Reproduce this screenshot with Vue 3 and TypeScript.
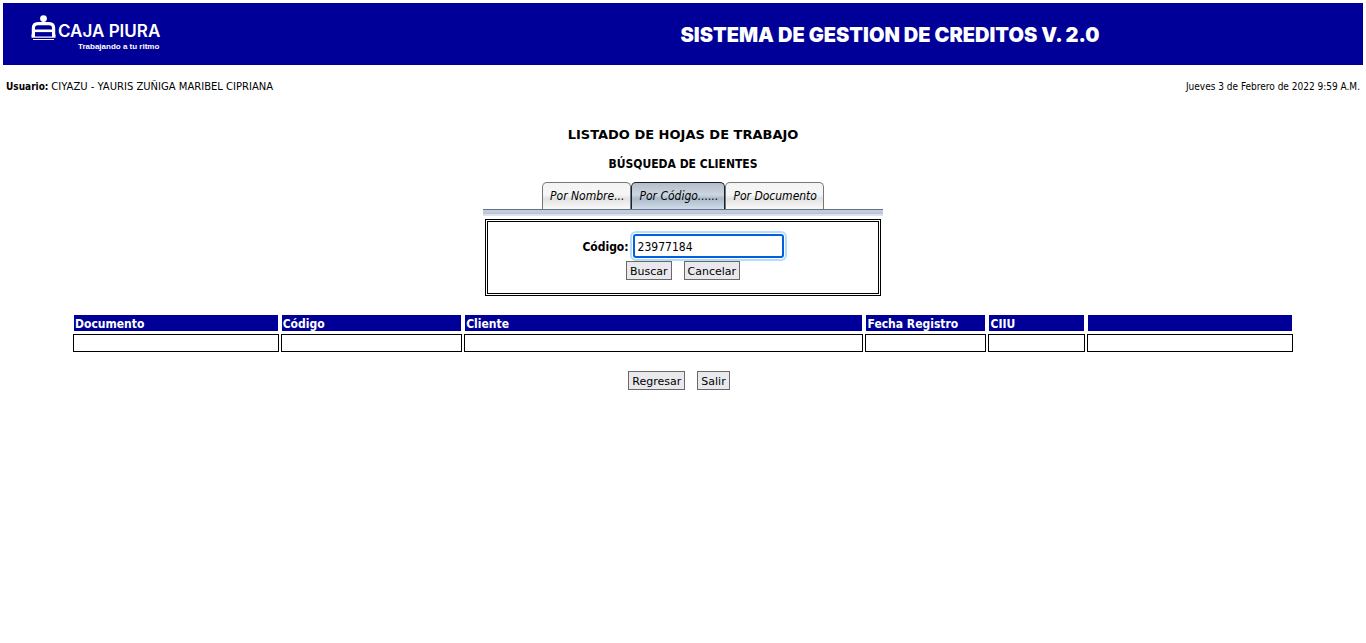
<script setup lang="ts">
import { ref } from 'vue'

interface Column {
  label: string
  width: string
}

const tabs: string[] = ['Por Nombre...', 'Por Código......', 'Por Documento']
const activeTab = ref(1)
const code = ref('23977184')

const columns: Column[] = [
  { label: 'Documento', width: '17%' },
  { label: 'Código', width: '15%' },
  { label: 'Cliente', width: '33%' },
  { label: 'Fecha Registro', width: '10%' },
  { label: 'CIIU', width: '8%' },
  { label: '', width: '17%' },
]
</script>

<template>
  <div class="page">
    <header class="banner">
      <div class="logo">
        <svg class="mark" viewBox="0 0 25 26" width="25" height="26" aria-hidden="true">
          <circle cx="12.5" cy="3.6" r="3.4" fill="#fff" />
          <path d="M2.4 21V13Q2.4 8.6 6.9 8.6H18.1Q22.6 8.6 22.6 13V21" fill="none" stroke="#fff" stroke-width="3.2" />
          <path d="M2 15.8H23" stroke="#fff" stroke-width="2.6" />
          <path d="M0.5 19.5H4V21.6H21V19.5H24.5V22.8H0.5ZM2 24H23V25H2Z" fill="#fff" />
        </svg>
        <div class="words">
          <span class="brand">CAJA PIURA</span>
          <span class="motto">Trabajando a tu ritmo</span>
        </div>
      </div>
      <div class="system">SISTEMA DE GESTION DE CREDITOS V. 2.0</div>
    </header>

    <div class="session">
      <span><b>Usuario:</b> <span class="user">CIYAZU - YAURIS ZUÑIGA MARIBEL CIPRIANA</span></span>
      <span>Jueves 3 de Febrero de 2022 9:59 A.M.</span>
    </div>

    <main>
      <h1>LISTADO DE HOJAS DE TRABAJO</h1>
      <h2>BÚSQUEDA DE CLIENTES</h2>

      <nav class="tabs">
        <button
          v-for="(tab, i) in tabs"
          :key="tab"
          type="button"
          class="tab"
          :class="{ active: i === activeTab }"
          @click="activeTab = i"
        >{{ tab }}</button>
      </nav>

      <form class="search" @submit.prevent>
        <div class="field">
          <label for="codigo">Código:</label>
          <input id="codigo" v-model="code" type="text" />
        </div>
        <div class="actions">
          <button type="submit" class="btn">Buscar</button>
          <button type="button" class="btn">Cancelar</button>
        </div>
      </form>

      <table>
        <colgroup>
          <col v-for="(c, i) in columns" :key="i" :style="{ width: c.width }" />
        </colgroup>
        <thead>
          <tr>
            <th v-for="(c, i) in columns" :key="i" scope="col">{{ c.label }}</th>
          </tr>
        </thead>
        <tbody>
          <tr>
            <td v-for="(c, i) in columns" :key="i"></td>
          </tr>
        </tbody>
      </table>

      <div class="footer">
        <button type="button" class="btn">Regresar</button>
        <button type="button" class="btn">Salir</button>
      </div>
    </main>
  </div>
</template>

<style>
body {
  background: #fff;
}
</style>

<style scoped>
.page {
  padding: 3px;
  color: #000;
  font-family: Tahoma, "DejaVu Sans Condensed", "DejaVu Sans", sans-serif;
  font-size: 12px;
}
.banner {
  display: flex;
  align-items: center;
  height: 62px;
  background: #000099;
  color: #fff;
}
.logo {
  display: flex;
  flex: 0 0 auto;
  align-items: flex-start;
  gap: 2px;
  width: 386px;
  padding-left: 28px;
}
.words {
  display: flex;
  flex-direction: column;
  padding-top: 6px;
}
.brand {
  font: 600 17px/20px Inter, sans-serif;
}
.motto {
  padding-left: 20px;
  font: bold 8px/12px "Liberation Sans", Arial, sans-serif;
}
.system {
  flex: 1;
  padding-top: 1px;
  text-align: center;
  font: 900 20px/22px "Arial Black", Inter, sans-serif;
}
.session {
  display: flex;
  justify-content: space-between;
  padding: 15px 3px 0;
  font-size: 10px;
  line-height: 14px;
}
.user {
  font-family: Verdana, "DejaVu Sans", sans-serif;
}
main {
  display: flex;
  flex-direction: column;
  align-items: center;
}
h1 {
  margin: 32px 0 0;
  font: bold 13px/18px Verdana, "DejaVu Sans", sans-serif;
}
h2 {
  margin: 12px 0 0;
  font-size: 12px;
  line-height: 16px;
}
.tabs {
  display: flex;
  justify-content: center;
  width: 400px;
  margin-top: 10px;
  padding-bottom: 7px;
  background: linear-gradient(#66718a 0 1px, #c3ccdc 1px 4px, #b7c3d3 4px 5px, #dce5ee 5px 7px) bottom / 100% 7px no-repeat;
}
.tab {
  height: 27px;
  padding: 0 6px 0 7px;
  border: 1px solid #777;
  border-bottom: 0;
  border-radius: 5px 5px 0 0;
  background: linear-gradient(#f4f4f4, #f6f6f6 45%, #e2e2e2 60%, #fafafa);
  color: #000;
  font: italic 12px/25px Tahoma, "DejaVu Sans Condensed", sans-serif;
}
.tab.active {
  border-color: #17202e;
  background: linear-gradient(#b4bdc8, #ccd6e1 45%, #abbac9 60%, #d0deea);
}
.search {
  box-sizing: border-box;
  width: 396px;
  margin-top: 3px;
  padding: 12px 0 13px;
  border: 3px double #000;
}
.field,
.actions {
  display: flex;
  justify-content: center;
  align-items: center;
}
.field {
  gap: 4px;
}
.field label {
  padding-top: 2px;
  font-weight: bold;
}
.field input {
  box-sizing: border-box;
  width: 151px;
  height: 24px;
  padding: 2px 3px 0;
  border: 2px solid #0060df;
  border-radius: 3px;
  outline: none;
  box-shadow: 0 0 0 1px #fff, 0 0 0 3px #b5dcf8;
  background: #fff;
  color: #000;
  font: 12px/18px Tahoma, "DejaVu Sans Condensed", sans-serif;
}
.actions {
  gap: 12px;
  margin-top: 3px;
}
.btn {
  height: 19px;
  padding: 2px 3px 0;
  border: 1px solid #696969;
  border-radius: 0;
  background: #e9e9ed;
  color: #000;
  font: 11px/15px Verdana, "DejaVu Sans", sans-serif;
}
table {
  width: 90%;
  margin-top: 16px;
  border-spacing: 2px;
}
th,
td {
  height: 14px;
  padding: 2px 1px 0;
  line-height: 14px;
}
th {
  border: 1px solid transparent;
  background: #000099;
  background-clip: padding-box;
  color: #fff;
  text-align: left;
}
td {
  border: 1px solid #000;
}
.footer {
  display: flex;
  gap: 12px;
  margin-top: 17px;
  padding-right: 8px;
}
</style>
